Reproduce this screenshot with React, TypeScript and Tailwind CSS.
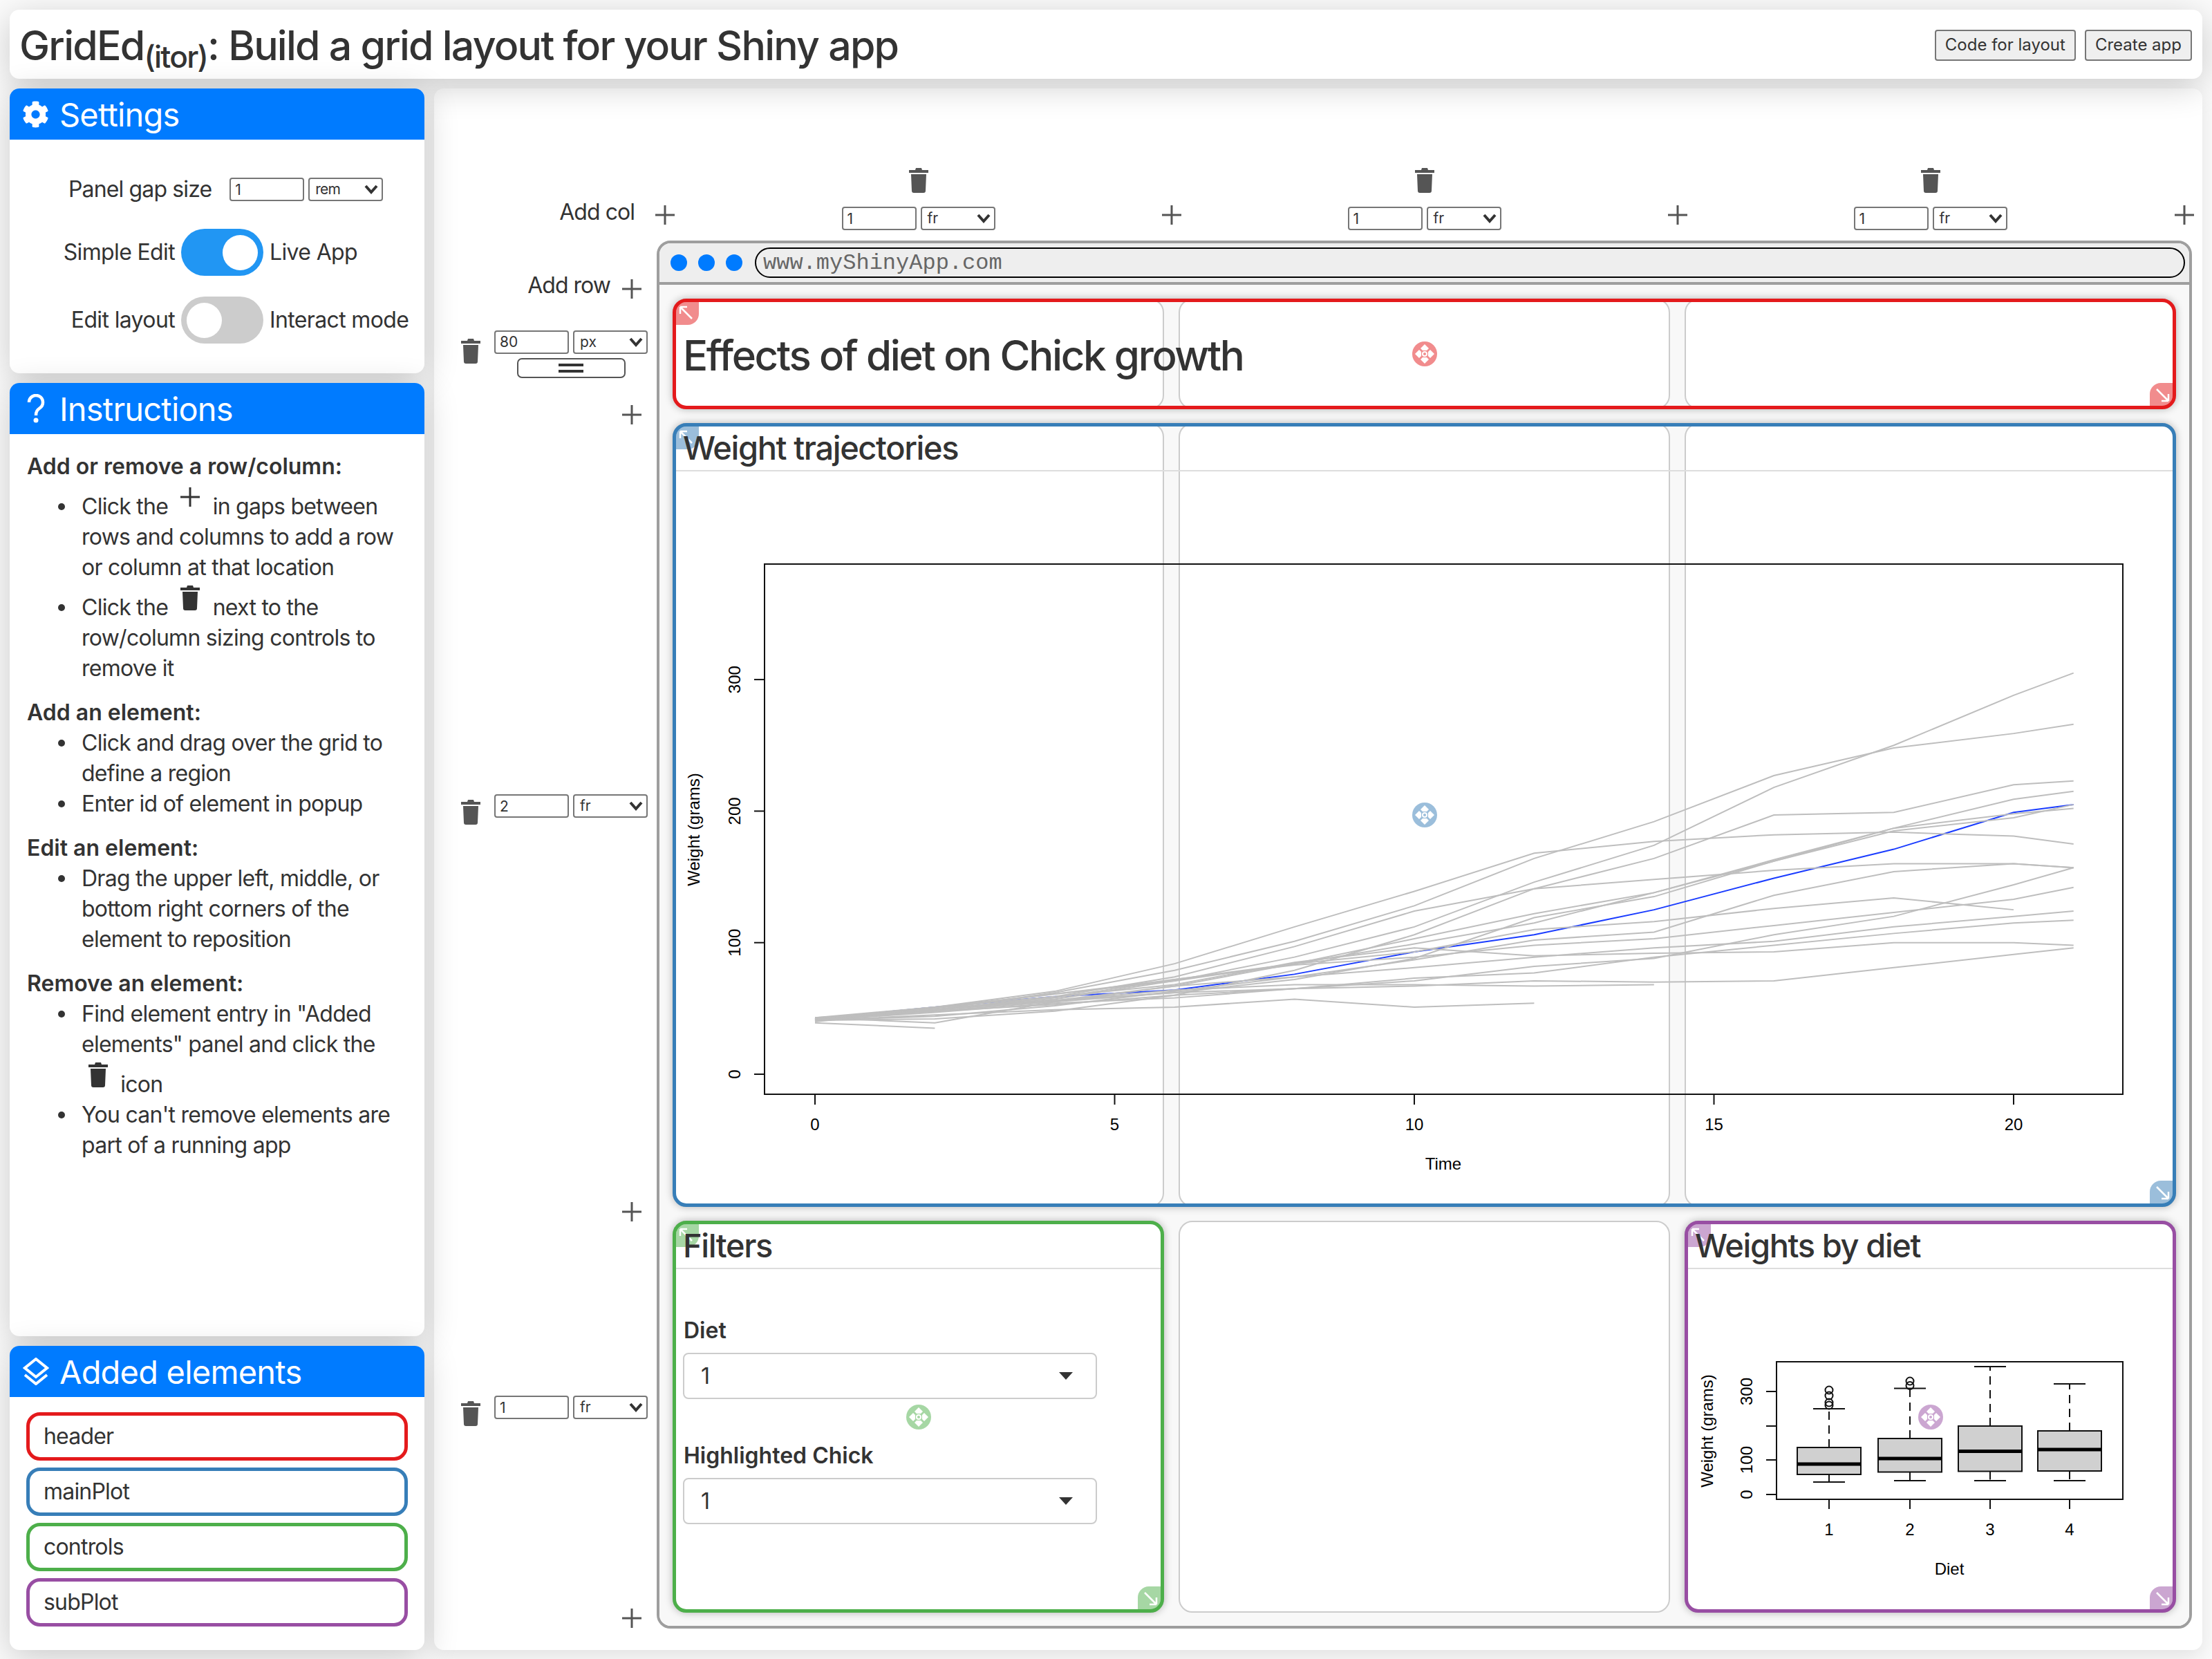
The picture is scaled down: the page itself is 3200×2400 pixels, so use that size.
import type { ReactNode } from "react";
import { FaCog } from "react-icons/fa";

const TIMES = [0, 2, 4, 6, 8, 10, 12, 14, 16, 18, 20, 21];

// ChickWeight, diet 1
const CHICKS = [
  [42, 51, 59, 64, 76, 93, 106, 125, 149, 171, 199, 205],
  [40, 49, 58, 72, 84, 103, 122, 138, 162, 187, 209, 215],
  [43, 39, 55, 67, 84, 99, 115, 138, 163, 187, 198, 202],
  [42, 49, 56, 67, 74, 87, 102, 108, 136, 154, 160, 157],
  [41, 42, 48, 60, 79, 106, 141, 164, 197, 199, 220, 223],
  [41, 49, 59, 74, 97, 124, 141, 148, 155, 160, 160, 157],
  [41, 49, 57, 71, 89, 112, 146, 174, 218, 250, 288, 305],
  [42, 50, 61, 71, 84, 93, 110, 116, 126, 134, 125],
  [42, 51, 59, 68, 85, 96, 90, 92, 93, 100, 100, 98],
  [41, 44, 52, 63, 74, 81, 89, 96, 101, 112, 120, 124],
  [43, 51, 63, 84, 112, 139, 168, 177, 182, 184, 181, 175],
  [41, 49, 56, 62, 72, 88, 119, 135, 162, 185, 195, 205],
  [41, 48, 53, 60, 65, 67, 71, 70, 71, 81, 91, 96],
  [41, 49, 62, 79, 101, 128, 164, 192, 227, 248, 259, 266],
  [41, 49, 56, 64, 68, 68, 67, 68],
  [41, 45, 49, 51, 57, 51, 54],
  [42, 51, 61, 72, 83, 89, 98, 103, 113, 123, 133, 142],
  [39, 35],
  [43, 48, 55, 62, 65, 71, 82, 88, 106, 120, 144, 157],
  [41, 47, 54, 58, 65, 73, 77, 89, 98, 107, 115, 117],
];

const BOXES = [
  { x: 2646, top: 2094, bottom: 2133, median: 2118, hi: 2038, lo: 2144, out: [2011, 2019, 2029, 2033] },
  { x: 2763, top: 2081, bottom: 2129.5, median: 2110, hi: 2008.5, lo: 2142, out: [1998, 2004.5] },
  { x: 2879, top: 2063, bottom: 2128.5, median: 2099.5, hi: 1977, lo: 2142, out: [] },
  { x: 2994, top: 2070, bottom: 2128, median: 2097, hi: 2002, lo: 2142, out: [] },
];

const RED = { border: "border-[#e41a1c]", tint: "bg-[#e41a1c]/50", text: "text-[#e41a1c]" };
const BLUE = { border: "border-[#377eb8]", tint: "bg-[#377eb8]/50", text: "text-[#377eb8]" };
const GREEN = { border: "border-[#4daf4a]", tint: "bg-[#4daf4a]/50", text: "text-[#4daf4a]" };
const PURPLE = { border: "border-[#984ea3]", tint: "bg-[#984ea3]/50", text: "text-[#984ea3]" };

const CELLS = [
  "row-start-1 col-start-1",
  "row-start-1 col-start-2",
  "row-start-1 col-start-3",
  "row-start-2 col-start-1",
  "row-start-2 col-start-2",
  "row-start-2 col-start-3",
  "row-start-3 col-start-1",
  "row-start-3 col-start-2",
  "row-start-3 col-start-3",
];

const CARD_SHADOW = "shadow-[0_10px_50px_rgba(0,0,0,0.2)]";

// the bullet sits further left than the browser's own marker
const LI = "relative before:content-[''] before:absolute before:left-[-34px] before:top-[17px] before:w-[10px] before:h-[10px] before:rounded-full before:bg-[#333]";
const LI_ICON = "relative before:content-[''] before:absolute before:left-[-34px] before:top-[31px] before:w-[10px] before:h-[10px] before:rounded-full before:bg-[#333]";

const Plus = ({ className = "" }: { className?: string }) => (
  <svg width="28" height="28" viewBox="0 0 28 28" className={className}>
    <path d="M14 0v28M0 14h28" stroke="currentColor" strokeWidth="3" />
  </svg>
);

const Trash = ({ className = "" }: { className?: string }) => (
  <svg width="28" height="36" viewBox="0 0 28 36" className={className} fill="currentColor">
    <path d="M0 3h9l1-3h8l1 3h9v4H0z" />
    <path d="M3 9h22l-1 24a3 3 0 0 1-3 3H7a3 3 0 0 1-3-3z" />
  </svg>
);

const SizeControl = ({ value, unit }: { value: string; unit: string }) => (
  <div className="flex gap-[6px]">
    <input
      readOnly
      value={value}
      className="w-[108px] h-[34px] border-2 border-[#767676] rounded-[4px] px-[6px] text-[21px] text-[#333] bg-white outline-none"
    />
    <div className="w-[108px] h-[34px] border-2 border-[#767676] rounded-[4px] pl-[8px] pr-[5px] text-[21px] text-[#333] flex items-center justify-between bg-white">
      <span>{unit}</span>
      <svg width="20" height="14" viewBox="0 0 20 14">
        <path d="M2 2l8 9 8-9" fill="none" stroke="#333" strokeWidth="4" />
      </svg>
    </div>
  </div>
);

const ColControl = ({ value }: { value: string }) => (
  <div className="flex flex-col items-center justify-end gap-[20px] pb-[15px] text-[#555]">
    <Trash />
    <SizeControl value={value} unit="fr" />
  </div>
);

const RowControl = ({ value, unit, handle }: { value: string; unit: string; handle?: boolean }) => (
  <div className="flex items-center justify-end gap-[20px] pr-[13px] text-[#555]">
    <Trash className="-mt-[8px]" />
    <div className={`flex flex-col items-center gap-[6px] ${handle ? "" : "mt-[10px]"}`}>
      <SizeControl value={value} unit={unit} />
      <div className={`w-[157px] h-[29px] flex flex-col items-center justify-center gap-[5px] rounded-[7px] border-2 border-[#555] ${handle ? "" : "invisible"}`}>
        <span className="block w-[36px] h-[4px] bg-[#333]" />
        <span className="block w-[36px] h-[4px] bg-[#333]" />
      </div>
    </div>
  </div>
);

const GapPlus = () => (
  <div className="flex items-center justify-end pr-[22px] pb-[5px] text-[#555]">
    <Plus className="shrink-0" />
  </div>
);

const Arrow = ({ className = "" }: { className?: string }) => (
  <svg width="33" height="33" viewBox="0 0 33 33" className={className}>
    <path d="M6 7l17 17M6 7h10M6 7v10" fill="none" stroke="white" strokeWidth="2.5" />
  </svg>
);

const MoveDot = () => (
  <svg width="36" height="36" viewBox="-18 -18 36 36">
    <circle r="18" fill="currentColor" opacity="0.5" />
    <g fill="white">
      <path d="M0-14l6 6-3 3h-6l-3-3z" />
      <path d="M14 0l-6 6-3-3v-6l3-3z" />
      <path d="M0 14l6-6-3-3h-6l-3 3z" />
      <path d="M-14 0l6 6 3-3v-6l-3-3z" />
      <circle r="4" />
    </g>
    <circle r="2" fill="currentColor" opacity="0.5" />
  </svg>
);

type Tone = typeof RED;

const Element = ({ tone, place, children }: { tone: Tone; place: string; children: ReactNode }) => (
  <div className={`relative z-10 flex flex-col min-h-0 border-[5px] rounded-[20px] shadow-[0_0_12px_rgba(0,0,0,0.28)] ${tone.border} ${place}`}>
    <div className={`absolute top-0 left-0 w-[33px] h-[33px] rounded-tl-[14px] rounded-br-[16px] ${tone.tint}`}>
      <Arrow />
    </div>
    <div className={`absolute bottom-0 right-0 w-[33px] h-[33px] rounded-br-[14px] rounded-tl-[16px] ${tone.tint}`}>
      <Arrow className="rotate-180" />
    </div>
    <div className="relative flex flex-col flex-1 min-h-0">{children}</div>
    <div className={`absolute inset-0 flex items-center justify-center pointer-events-none ${tone.text}`}>
      <MoveDot />
    </div>
  </div>
);

const PanelTitle = ({ children }: { children: ReactNode }) => (
  <h3 className="h-[65px] shrink-0 pl-[10px] pt-[2px] border-b-2 border-[#ddd] text-[47px] leading-[58px] font-medium tracking-[-0.03em] text-[#333]">{children}</h3>
);

const FakeSelect = ({ className = "" }: { className?: string }) => (
  <div className={`ml-[10px] w-[599px] h-[67px] border-2 border-[#ccc] rounded-[8px] pl-[24px] pr-[33px] flex items-center justify-between text-[32px] text-[#333] ${className}`}>
    <span>1</span>
    <span className="block w-0 h-0 border-x-[10px] border-t-[11px] border-x-transparent border-t-[#333]" />
  </div>
);

const MainPlot = () => (
  <svg width="2165" height="1059" viewBox="978 682 2165 1059" className="block shrink-0 text-black">
    {CHICKS.map((c, i) => (
      <polyline
        key={i}
        points={c.map((w, j) => `${1179 + TIMES[j] * 86.7},${1554 - w * 1.903}`).join(" ")}
        fill="none"
        stroke={i === 0 ? "#1a3cff" : "#bebebe"}
        strokeWidth="2"
      />
    ))}
    <rect x="1106" y="816" width="1965" height="767" fill="none" stroke="#111" strokeWidth="2" />
    {[0, 5, 10, 15, 20].map((t) => (
      <g key={t}>
        <path d={`M${1179 + t * 86.7} 1583v15`} stroke="#111" strokeWidth="2" />
        <text x={1179 + t * 86.7} y="1635" textAnchor="middle" fontSize="24" fontFamily="Liberation Sans">{t}</text>
      </g>
    ))}
    {[0, 100, 200, 300].map((w) => (
      <g key={w}>
        <path d={`M1091 ${1554 - w * 1.903}h15`} stroke="#111" strokeWidth="2" />
        <text x="1071" y={1554 - w * 1.903} transform={`rotate(-90 1071 ${1554 - w * 1.903})`} textAnchor="middle" fontSize="24" fontFamily="Liberation Sans">{w}</text>
      </g>
    ))}
    <text x="2088" y="1692" textAnchor="middle" fontSize="24" fontFamily="Liberation Sans">Time</text>
    <text x="1012" y="1200" transform="rotate(-90 1012 1200)" textAnchor="middle" fontSize="24" fontFamily="Liberation Sans">Weight (grams)</text>
  </svg>
);

const BoxPlot = () => (
  <svg width="701" height="491" viewBox="2442 1836 701 491" className="block shrink-0">
    <rect x="2570" y="1970" width="501" height="199" fill="none" stroke="#111" strokeWidth="2" />
    {BOXES.map((b, i) => (
      <g key={b.x} stroke="#111" strokeWidth="2">
        <path d={`M${b.x} ${b.top}V${b.hi}M${b.x} ${b.bottom}V${b.lo}`} strokeDasharray="12 8" />
        <path d={`M${b.x - 23} ${b.hi}h46M${b.x - 23} ${b.lo}h46`} />
        <rect x={b.x - 46} y={b.top} width="92" height={b.bottom - b.top} fill="#d0d0d0" />
        <path d={`M${b.x - 46} ${b.median}h92`} strokeWidth="5" stroke="#000" />
        {b.out.map((y) => (
          <circle key={y} cx={b.x} cy={y} r="5.5" fill="none" />
        ))}
        <path d={`M${b.x} 2169v14`} />
        <text x={b.x} y="2221" textAnchor="middle" fontSize="24" fontFamily="Liberation Sans" fill="#000" stroke="none">{i + 1}</text>
      </g>
    ))}
    {[2162, 2112, 2063, 2013].map((y) => (
      <path key={y} d={`M2555 ${y}h15`} stroke="#111" strokeWidth="2" />
    ))}
    {[["0", 2162], ["100", 2112], ["300", 2013]].map(([t, y]) => (
      <text key={t} x="2535" y={y} transform={`rotate(-90 2535 ${y})`} textAnchor="middle" fontSize="24" fontFamily="Liberation Sans">{t}</text>
    ))}
    <text x="2820" y="2278" textAnchor="middle" fontSize="24" fontFamily="Liberation Sans">Diet</text>
    <text x="2478" y="2070" transform="rotate(-90 2478 2070)" textAnchor="middle" fontSize="24" fontFamily="Liberation Sans">Weight (grams)</text>
  </svg>
);

const CardHeader = ({ icon, children }: { icon: ReactNode; children: ReactNode }) => (
  <div className="h-[74px] shrink-0 bg-[#007bff] text-white flex items-center">
    <span className="w-[72px] flex justify-center pl-[3px]">{icon}</span>
    <h2 className="text-[47px] leading-none tracking-[-0.017em]">{children}</h2>
  </div>
);

const Toggle = ({ on }: { on?: boolean }) => (
  <div className={`w-[119px] h-[68px] rounded-full flex items-center px-[8px] ${on ? "bg-[#2196f3] justify-end" : "bg-[#ccc] justify-start"}`}>
    <span className="block w-[51px] h-[51px] rounded-full bg-white" />
  </div>
);

const Settings = () => (
  <section className={`h-[412px] shrink-0 bg-white rounded-[14px] overflow-hidden ${CARD_SHADOW}`}>
    <CardHeader icon={<FaCog size={39} />}>Settings</CardHeader>
    <div className="text-[32px] text-[#333] tracking-[-0.02em]">
      <div className="flex items-center gap-[26px] pl-[85px] pt-[48px] tracking-[-0.027em]">
        <span>Panel gap size</span>
        <SizeControl value="1" unit="rem" />
      </div>
      <div className="grid grid-cols-[239px_119px_1fr] gap-x-[9px] gap-y-[30px] items-center mt-[33px]">
        <span className="text-right">Simple Edit</span>
        <Toggle on />
        <span>Live App</span>
        <span className="text-right">Edit layout</span>
        <Toggle />
        <span>Interact mode</span>
      </div>
    </div>
  </section>
);

const Heading = ({ children }: { children: ReactNode }) => <p className="font-semibold tracking-normal">{children}</p>;

const Instructions = () => (
  <section className={`flex-1 min-h-0 bg-white rounded-[14px] overflow-hidden ${CARD_SHADOW}`}>
    <CardHeader
      icon={
        <svg width="26" height="42" viewBox="0 0 26 42" fill="none" stroke="white" strokeWidth="4.5">
          <path d="M3 12a10 10 0 1 1 16 8c-4 3-6 5-6 11" />
          <circle cx="13" cy="38" r="3.5" fill="white" stroke="none" />
        </svg>
      }
    >
      Instructions
    </CardHeader>
    <div className="px-[25px] pt-[25px] text-[32px] leading-[44px] tracking-[-0.023em] text-[#333] flex flex-col gap-[20px]">
      <div>
        <Heading>Add or remove a row/column:</Heading>
        <ul className="pl-[79px]">
          <li className={`pt-[8px] ${LI_ICON}`}>
            Click the <Plus className="inline-block mx-[10px] align-[11px]" /> in gaps between rows and columns to add a row or column at that location
          </li>
          <li className={`pt-[4px] ${LI_ICON}`}>
            Click the <Trash className="inline-block mx-[10px] align-[7px]" /> next to the row/column sizing controls to remove it
          </li>
        </ul>
      </div>
      <div>
        <Heading>Add an element:</Heading>
        <ul className="pl-[79px]">
          <li className={LI}>Click and drag over the grid to define a region</li>
          <li className={LI}>Enter id of element in popup</li>
        </ul>
      </div>
      <div>
        <Heading>Edit an element:</Heading>
        <ul className="pl-[79px]">
          <li className={LI}>Drag the upper left, middle, or bottom right corners of the element to reposition</li>
        </ul>
      </div>
      <div>
        <Heading>Remove an element:</Heading>
        <ul className="pl-[79px]">
          <li className={LI}>
            Find element entry in "Added elements" panel and click the <Trash className="inline-block mx-[10px] mt-[4px] align-[7px]" /> icon
          </li>
          <li className={LI}>You can't remove elements are part of a running app</li>
        </ul>
      </div>
    </div>
  </section>
);

const AddedItem = ({ tone, name }: { tone: Tone; name: string }) => (
  <div className={`h-[70px] border-[5px] rounded-[20px] pl-[20px] flex items-center text-[32px] tracking-[-0.025em] text-[#333] ${tone.border}`}>{name}</div>
);

const AddedElements = () => (
  <section className={`h-[440px] shrink-0 bg-white rounded-[14px] overflow-hidden ${CARD_SHADOW}`}>
    <CardHeader
      icon={
        <svg width="38" height="40" viewBox="0 0 38 40" fill="none" stroke="white" strokeWidth="4">
          <path d="M19 2l16 13-16 13L3 15z" />
          <path d="M3 25l16 13 16-13" />
        </svg>
      }
    >
      Added elements
    </CardHeader>
    <div className="flex flex-col gap-[10px] px-[24px] pt-[22px]">
      <AddedItem tone={RED} name="header" />
      <AddedItem tone={BLUE} name="mainPlot" />
      <AddedItem tone={GREEN} name="controls" />
      <AddedItem tone={PURPLE} name="subPlot" />
    </div>
  </section>
);

const Editor = () => (
  <main className="z-0 bg-white rounded-[14px] grid grid-cols-[322px_1fr] grid-rows-[220px_1fr] pr-[15px] pb-[31px] shadow-[0_10px_30px_rgba(0,0,0,0.1)]">
    <div className="flex items-end justify-end pr-[32px] pb-[19px] text-[32px] leading-[44px] tracking-[-0.03em] text-[#333]">Add col</div>
    <div className="grid grid-cols-[23px_711px_21px_711px_21px_711px_23px]">
      <div className="flex items-end justify-center pb-[23px] text-[#555]"><Plus className="shrink-0" /></div>
      <ColControl value="1" />
      <div className="flex items-end justify-center pb-[23px] text-[#555]"><Plus className="shrink-0" /></div>
      <ColControl value="1" />
      <div className="flex items-end justify-center pb-[23px] text-[#555]"><Plus className="shrink-0" /></div>
      <ColControl value="1" />
      <div className="flex items-end justify-center pb-[23px] text-[#555]"><Plus className="shrink-0" /></div>
    </div>

    <div className="grid grid-rows-[84px_160px_20px_1133px_20px_567px_23px]">
      <div className="flex items-end justify-end gap-[17px] pr-[22px] text-[#555]">
        <span className="text-[32px] leading-[44px] tracking-[-0.03em] text-[#333] -mb-[3px]">Add row</span>
        <Plus />
      </div>
      <RowControl value="80" unit="px" handle />
      <GapPlus />
      <RowControl value="2" unit="fr" />
      <GapPlus />
      <RowControl value="1" unit="fr" />
      <GapPlus />
    </div>

    <div className="border-4 border-[#9e9e9e] rounded-[20px] flex flex-col min-h-0 overflow-hidden">
      <div className="h-[60px] shrink-0 bg-[#eee] border-b-4 border-[#9e9e9e] flex items-center pl-[16px] pr-[6px]">
        <span className="w-[24px] h-[24px] rounded-full bg-[#007bff] shrink-0" />
        <span className="w-[24px] h-[24px] rounded-full bg-[#007bff] shrink-0 ml-[16px]" />
        <span className="w-[24px] h-[24px] rounded-full bg-[#007bff] shrink-0 ml-[16px]" />
        <div className="ml-[18px] flex-1 h-[44px] border-2 border-black rounded-[24px] pl-[10px] pt-[2px] flex items-center text-[32px] text-[#666] [font-family:'Liberation_Mono',monospace]">www.myShinyApp.com</div>
      </div>
      <div className="flex-1 min-h-0 bg-[#f8f8f8] grid grid-cols-3 grid-rows-[160px_2fr_1fr] gap-x-[21px] gap-y-[20px] px-[19px] pt-[20px] pb-[19px]">
        {CELLS.map((c) => (
          <div key={c} className={`${c} bg-white border-2 border-[#ccc] rounded-[20px]`} />
        ))}
        <Element tone={RED} place="row-start-1 col-start-1 col-span-3">
          <h1 className="pl-[10px] pt-[4px] h-full flex items-center text-[60px] font-medium tracking-[-0.039em] text-[#333]">Effects of diet on Chick growth</h1>
        </Element>
        <Element tone={BLUE} place="row-start-2 col-start-1 col-span-3">
          <PanelTitle>Weight trajectories</PanelTitle>
          <MainPlot />
        </Element>
        <Element tone={GREEN} place="row-start-3 col-start-1">
          <PanelTitle>Filters</PanelTitle>
          <label className="mt-[67px] ml-[11px] text-[32px] leading-[44px] font-semibold text-[#333]">Diet</label>
          <FakeSelect className="mt-[10px]" />
          <label className="mt-[60px] ml-[11px] text-[32px] leading-[44px] font-semibold text-[#333]">Highlighted Chick</label>
          <FakeSelect className="mt-[10px]" />
        </Element>
        <Element tone={PURPLE} place="row-start-3 col-start-3">
          <PanelTitle>Weights by diet</PanelTitle>
          <BoxPlot />
        </Element>
      </div>
    </div>
  </main>
);

export default function App() {
  return (
    <div className="w-[3200px] h-[2400px] bg-[#fbfbfb] p-[14px] grid grid-cols-[600px_1fr] grid-rows-[100px_1fr] gap-x-[14px] gap-y-[14px] overflow-hidden [font-family:Inter,sans-serif]">
      <header className={`col-span-2 z-10 bg-white rounded-[14px] flex items-center justify-between pl-[14px] pr-[15px] pt-[2px] ${CARD_SHADOW}`}>
        <h1 className="text-[59px] leading-none font-medium tracking-[-0.03em] text-[#333]">
          GridEd<sub>(itor)</sub>: Build a grid layout for your Shiny app
        </h1>
        <div className="flex gap-[13px]">
          <button className="h-[45px] px-[13px] border-2 border-[#767676] rounded-[4px] bg-[#efefef] text-[24px] text-[#333]">Code for layout</button>
          <button className="h-[45px] px-[13px] border-2 border-[#767676] rounded-[4px] bg-[#efefef] text-[24px] text-[#333]">Create app</button>
        </div>
      </header>
      <aside className="z-10 flex flex-col gap-[14px] min-h-0">
        <Settings />
        <Instructions />
        <AddedElements />
      </aside>
      <Editor />
    </div>
  );
}
